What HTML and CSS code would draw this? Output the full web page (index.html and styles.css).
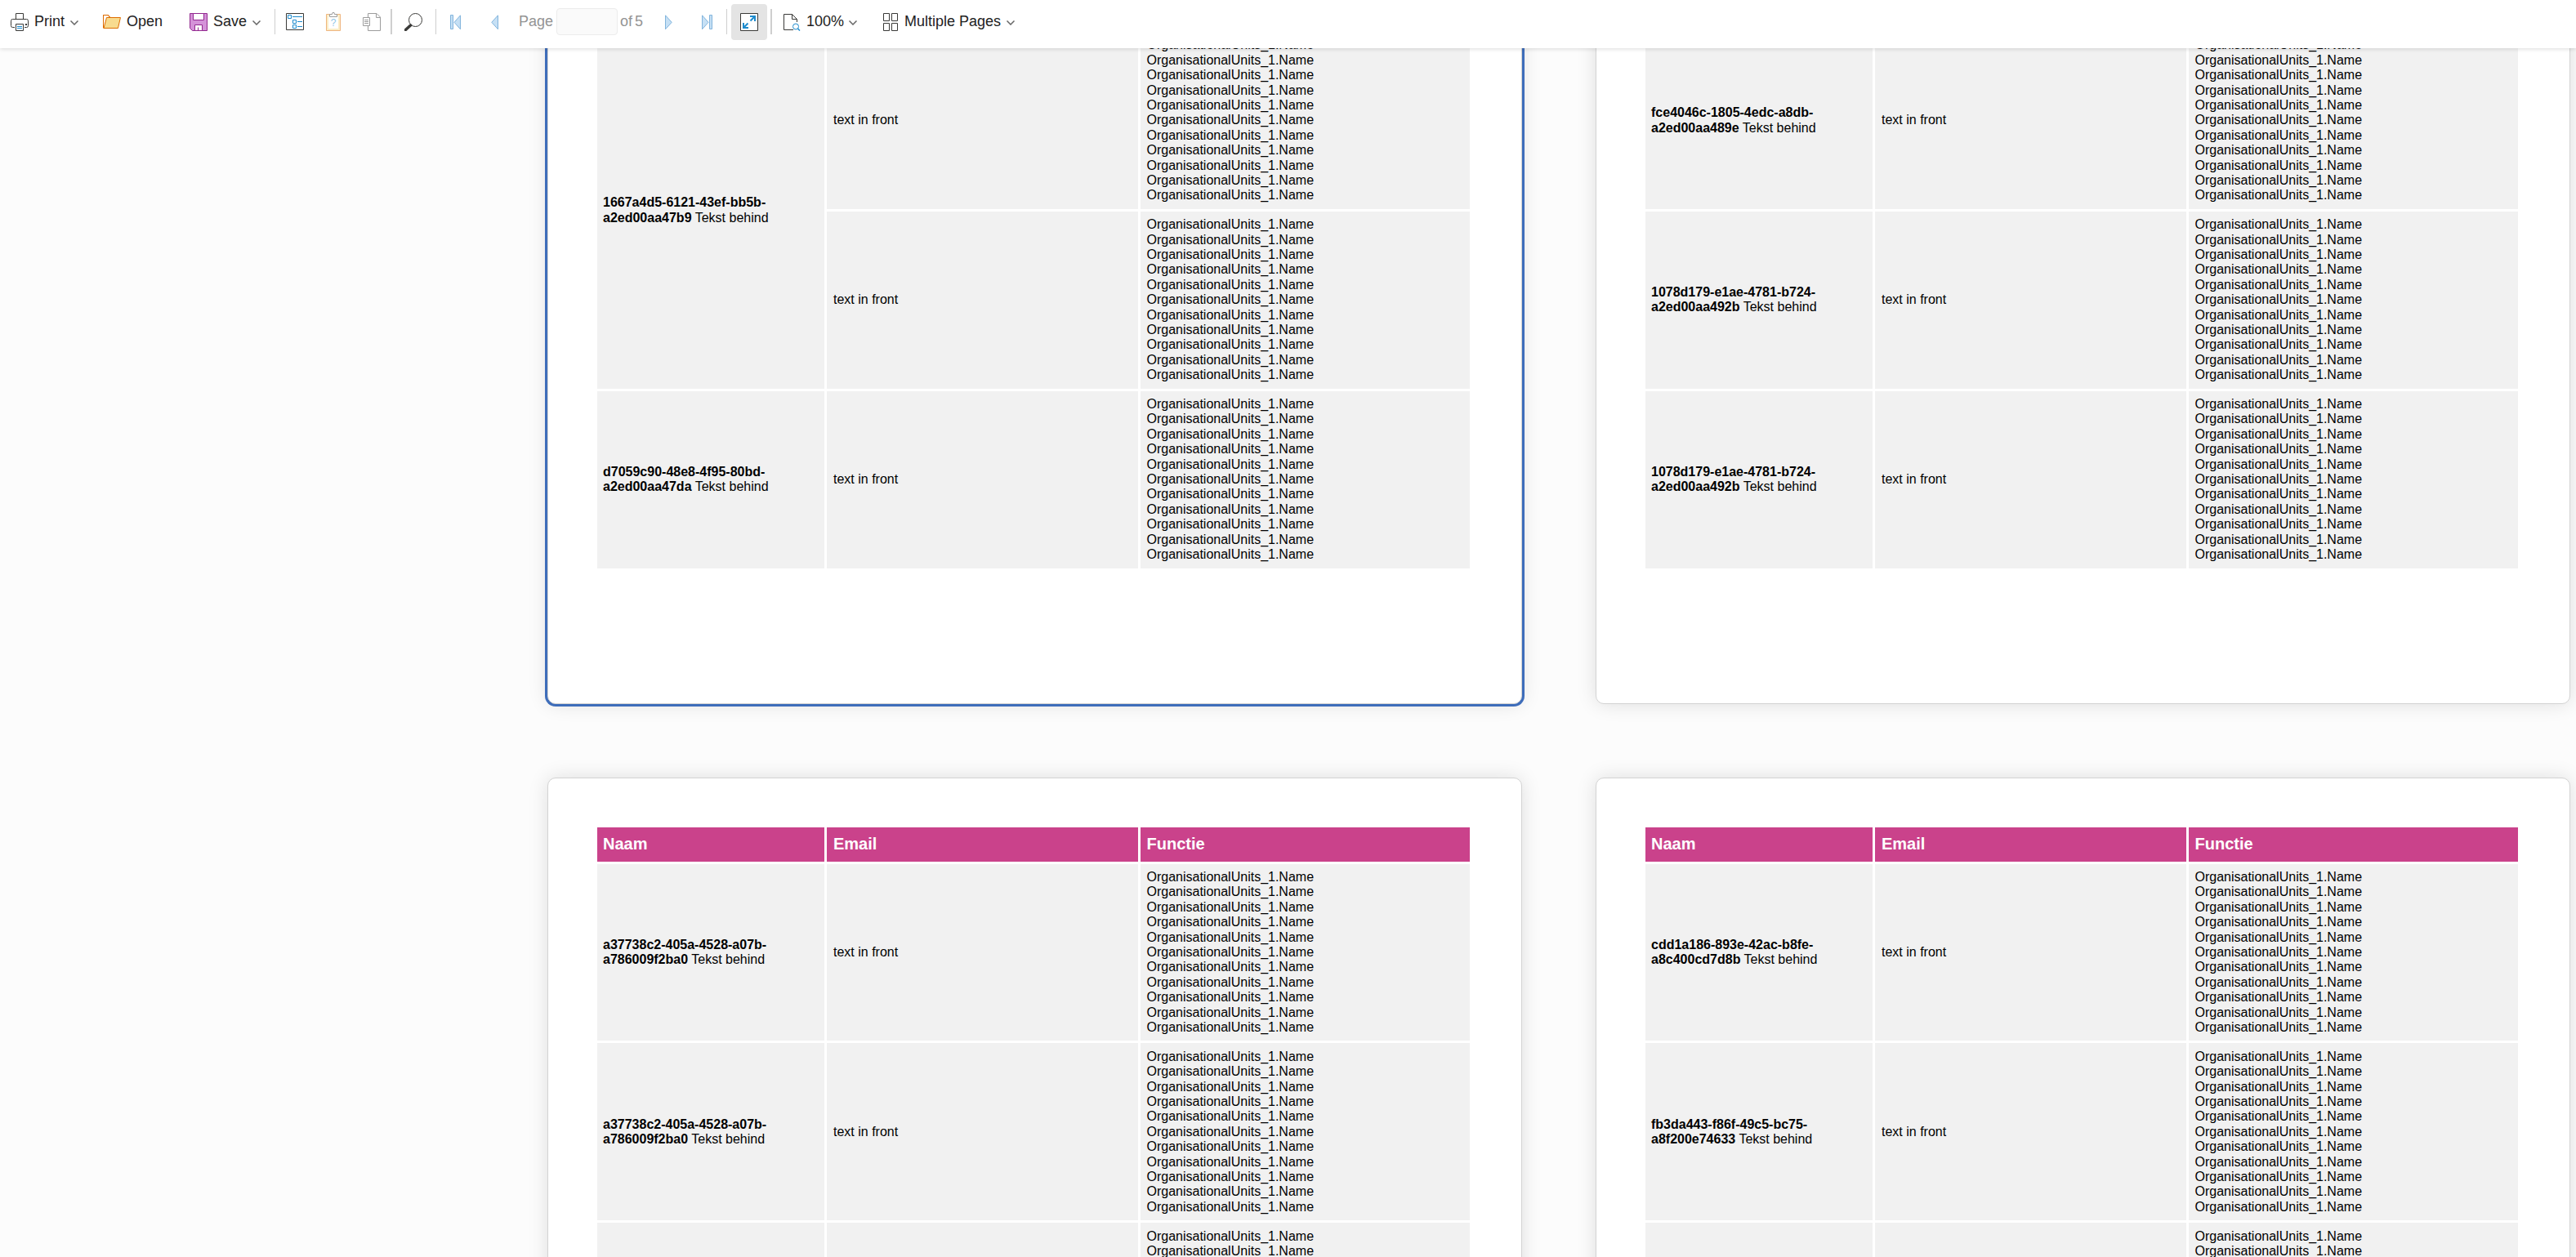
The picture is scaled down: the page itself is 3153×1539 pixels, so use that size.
FILE: index.html
```html
<!DOCTYPE html>
<html lang="en">
<head>
<meta charset="utf-8">
<title>Report viewer</title>
<link rel="stylesheet" href="styles.css">
</head>
<body>
<div class="viewer">
  <header class="toolbar">
    <div class="tool tool-print">
      <svg class="icon" width="22" height="22" viewBox="0 0 22 22" fill="none" stroke="#3a3a38">
        <path d="M6.5 7.500V.5h9v7M5 17.500H2.500a2 2 0 0 1-2-2v-6a2 2 0 0 1 2-2h17a2 2 0 0 1 2 2v6a2 2 0 0 1-2 2H17M6.500 13.500h9v8h-9z"/>
        <path d="M8 16.500h6M8 18.500h6" stroke="#1e8bcd"/><path d="M18 14h2" stroke-width="2"/>
      </svg>
      <span class="label label-print">Print</span>
      <svg class="chevron" width="10" height="6" viewBox="0 0 10 6"><path d="M.5.500 5 5 9.500.500"/></svg>
    </div>
    <div class="tool tool-open">
      <svg class="icon" width="22" height="17" viewBox="0 0 22 17" stroke="#de6c00">
        <path d="M.5 16V.500h6l2 3h9v3" fill="#fff"/><path d="M1 16.500 4.500 3.500h17l-3 13z" fill="#f8db8f"/><path d="M.5 16.500V.500h6l2.500 3" fill="none"/>
      </svg>
      <span class="label">Open</span>
    </div>
    <div class="tool tool-save">
      <svg class="icon" width="22" height="22" viewBox="0 0 22 22" stroke="#92278f">
        <path d="M.5.500h21v21H3.500l-3-3z" fill="#d492d8"/><path d="M4.500.500h13v8h-13zM6.500 21.500v-7h9v7z" fill="#fff"/><path d="M10.500 17.500v4" />
      </svg>
      <span class="label label-save">Save</span>
      <svg class="chevron" width="10" height="6" viewBox="0 0 10 6"><path d="M.5.500 5 5 9.500.500"/></svg>
    </div>
    <i class="sep sep-file"></i>
    <svg class="icon icon-params" width="22" height="21" viewBox="0 0 22 21" fill="none" stroke="#1e8bcd">
      <path d="M.5.500h21v20H.500z" stroke="#3a3a38"/><path d="M2.500 2.500h4v4h-4zM8.500 8.500h4v4h-4zM8.500 14.500h4v4h-4zM8 4.500h12M14 10.500h6M14 16.500h6"/>
    </svg>
    <svg class="icon icon-clipboard" width="18" height="23" viewBox="0 0 18 23" fill="none">
      <path d="M.5 2.500h17v20H.500z" fill="#fbedc7" stroke="#eeb57f"/><path d="M3 5h12v15H3z" fill="#fff"/>
      <path d="M4.500 5.500v-3h3l.5-2h2l.5 2h3v3z" fill="#fff" stroke="#9c9c9c"/>
      <text class="question" x="9" y="16.500">?</text>
    </svg>
    <svg class="icon icon-copy" width="22" height="22" viewBox="0 0 22 22" fill="none" stroke="#9c9c9c">
      <path d="M6.500 5V.500H17l4.500 4.500v16.500h-15V16M16.500.500v5h5M.5 5.500h8v10h-8zM2 8.500h5M2 10.500h5M2 12.500h5"/>
    </svg>
    <i class="sep sep-wide sep-edit"></i>
    <svg class="icon icon-find" width="22" height="22" viewBox="0 0 22 22" fill="none" stroke="#3a3a38">
      <circle cx="13.500" cy="8.500" r="8"/><path d="m1.500 20.500 6-5.500" stroke-width="3.500" stroke-linecap="round"/>
    </svg>
    <i class="sep sep-find"></i>
    <svg class="nav nav-first" width="13" height="19" viewBox="0 0 13 19"><path d="M.5.500h3v17h-3zM12.500.800v17L5 9.300z"/></svg>
    <svg class="nav nav-prev" width="9" height="19" viewBox="0 0 9 19"><path d="M8.500.800v17L.800 9.300z"/></svg>
    <span class="label label-off label-page">Page</span>
    <input class="page-input" type="text" aria-label="Page" disabled>
    <span class="label label-off label-of">of</span>
    <span class="label label-off label-total">5</span>
    <svg class="nav nav-next" width="9" height="19" viewBox="0 0 9 19"><path d="M.5.800v17l7.700-8.500z"/></svg>
    <svg class="nav nav-last" width="13" height="19" viewBox="0 0 13 19"><path d="M9.500.500h3v17h-3zM.5.800v17L8 9.300z"/></svg>
    <i class="sep sep-nav"></i>
    <div class="toggle-full">
      <svg width="22" height="22" viewBox="0 0 22 22" fill="none">
        <path d="M.5.500h21v21H.500z" fill="#fff" stroke="#3a3a38"/>
        <path d="m12.500 9.500 5-5M9.500 12.500l-5 5" stroke="#1e8bcd" stroke-width="2"/><path d="M12 3h7v7h-2V5h-5zM3 12h2v5h5v2H3z" fill="#1e8bcd"/>
      </svg>
    </div>
    <i class="sep sep-wide sep-full"></i>
    <div class="tool tool-zoom">
      <svg class="icon" width="21" height="22" viewBox="0 0 21 22" fill="none" stroke="#3a3a38">
        <path d="M12 20.500H.500V1.500h10l6 6V11M10.500 1.500v6h6"/><g stroke="#1e8bcd"><circle cx="15" cy="16.500" r="3.500"/><path d="m17.500 19 2.500 2.500" stroke-width="1.500"/></g>
      </svg>
      <span class="label label-zoom">100%</span>
      <svg class="chevron" width="10" height="6" viewBox="0 0 10 6"><path d="M.5.500 5 5 9.500.500"/></svg>
    </div>
    <div class="tool tool-pages">
      <svg class="icon" width="18" height="22" viewBox="0 0 18 22" fill="none" stroke="#3a3a38">
        <path d="M.5.500h7v9h-7zM10.500.500h7v9h-7zM.5 12.500h7v9h-7zM10.500 12.500h7v9h-7z"/>
      </svg>
      <span class="label label-pages">Multiple Pages</span>
      <svg class="chevron" width="10" height="6" viewBox="0 0 10 6"><path d="M.5.500 5 5 9.500.500"/></svg>
    </div>
  </header>
  <main class="workspace">
    <div class="pages" id="pages"></div>
  </main>
</div>
<script src="report.js"></script>
</body>
</html>
```
FILE: styles.css
```css
* { box-sizing: border-box; }

body {
  margin: 0;
  background: #fcfcfc;
  color: #000;
  font-family: "Liberation Sans", Arial, sans-serif;
}

.viewer {
  display: flex;
  flex-direction: column;
  height: 100vh;
  overflow: hidden;
}

/* Toolbar */
.toolbar {
  display: flex;
  flex: none;
  align-items: center;
  height: 59px;
  padding: 0 0 5px 13px;
  background: #fff;
  box-shadow: 0 1px 5px rgba(0, 0, 0, .14);
  position: relative;
  z-index: 1;
}

.toolbar > * { flex: none; }

.tool {
  display: flex;
  align-items: center;
}

.tool .icon { margin-right: 7px; }

.label {
  color: #222;
  font-size: 18px;
  line-height: 20px;
  white-space: nowrap;
  margin-top: -2px;
}

.label-off { color: #949494; }

.label-print { width: 44px; }
.label-save { width: 48px; }
.label-zoom { width: 52px; }
.label-pages { width: 125px; }

.chevron {
  fill: none;
  stroke: #666;
  stroke-width: 1.5;
  margin-top: 2px;
}

.tool-open { width: 73px; margin-left: 30px; }
.tool-open .icon { margin-top: -1px; }
.tool-save { margin-left: 33px; }

.sep {
  width: 1px;
  height: 31px;
  background: #cfcfcf;
  margin-top: -1px;
}

.sep-wide { width: 2px; }

.sep-file { margin-left: 17px; }
.icon-params { margin-left: 13px; margin-top: -1px; }
.icon-clipboard { margin-left: 27px; margin-top: -1px; }
.icon-copy { margin-left: 27px; }
.sep-edit { margin-left: 12px; }
.icon-find { margin-left: 15px; }
.sep-find { margin-left: 16px; }

.question {
  fill: #8fc6e8;
  font-size: 12px;
  text-anchor: middle;
}

.nav {
  fill: #c6e0f5;
  stroke: #82b4dc;
  margin-top: 1px;
}

.nav-first { margin-left: 17px; }
.nav-prev { margin-left: 37px; }
.label-page { width: 46px; margin-left: 25px; }

.page-input {
  width: 75px;
  height: 33px;
  margin: -1px 0 0;
  border: 1px solid #ececec;
  border-radius: 4px;
  background: #fafafa;
}

.label-of { width: 18px; margin-left: 3px; }
.label-total { width: 10px; }
.nav-next { margin-left: 27px; }
.nav-last { margin-left: 36px; }
.sep-nav { margin-left: 17px; }

.toggle-full {
  display: flex;
  align-items: center;
  justify-content: center;
  width: 44px;
  height: 44px;
  margin-left: 5px;
  border-radius: 4px;
  background: #e4e4e4;
}

.sep-full { margin-left: 4px; }
.tool-zoom { margin-left: 14px; }
.tool-pages { margin-left: 32px; }
.tool-pages .icon { margin-right: 8px; }

/* Report pages */
.workspace {
  flex: 1;
  min-height: 0;
  overflow: hidden;
}

.pages {
  display: grid;
  grid-template-columns: 1193px 1193px;
  grid-auto-rows: 883.4px;
  gap: 90px;
  margin: -80.4px 0 0 670px;
}

.page {
  padding: 60px;
  border: 1px solid #d3d3d3;
  border-radius: 10px;
  background: #fff;
  box-shadow: 0 0 24px rgba(0, 0, 0, .12);
}

.page-current {
  box-shadow: 0 0 0 3px #3e6dba, 0 0 24px rgba(0, 0, 0, .12);
}

.report {
  display: grid;
  grid-template-columns: 278px 381px 403px;
  grid-auto-rows: 216.8px;
  gap: 3px;
}

.with-head { grid-template-rows: 41.6px; }

.head,
.cell {
  display: flex;
  flex-direction: column;
  justify-content: center;
  padding: 0 7px;
}

.head {
  padding-bottom: 1px;
  background: #ca428b;
  color: #fff;
  font-size: 20px;
  font-weight: bold;
}

.cell {
  padding-bottom: .8px;
  background: #f1f1f1;
  font-size: 16px;
  line-height: 18.4px;
}

.with-head .cell {
  padding-top: .3px;
  padding-bottom: 0;
}

.report .email { padding-left: 8px; }
.report .units { padding-left: 7.5px; }

.with-head .units-cut {
  justify-content: flex-start;
  padding-top: 7.5px;
}

.span-2 { grid-row: span 2; }
```
FILE: report.js
```js
const LINES_PER_ROW = 11;

// One entry per page; span is the number of rows the name cell covers.
const pages = [
  { current: true, names: [
    { id: ['1667a4d5-6121-43ef-bb5b-', 'a2ed00aa47b9'], span: 2 },
    { id: ['d7059c90-48e8-4f95-80bd-', 'a2ed00aa47da'], span: 1 } ] },
  { names: [
    { id: ['fce4046c-1805-4edc-a8db-', 'a2ed00aa489e'], span: 1 },
    { id: ['1078d179-e1ae-4781-b724-', 'a2ed00aa492b'], span: 1 },
    { id: ['1078d179-e1ae-4781-b724-', 'a2ed00aa492b'], span: 1 } ] },
  { head: true, names: [
    { id: ['a37738c2-405a-4528-a07b-', 'a786009f2ba0'], span: 1 },
    { id: ['a37738c2-405a-4528-a07b-', 'a786009f2ba0'], span: 1 },
    { span: 1, lines: 2 } ] },
  { head: true, names: [
    { id: ['cdd1a186-893e-42ac-b8fe-', 'a8c400cd7d8b'], span: 1 },
    { id: ['fb3da443-f86f-49c5-bc75-', 'a8f200e74633'], span: 1 },
    { span: 1, lines: 2 } ] }
];

const head = '<div class="head">Naam</div><div class="head email">Email</div><div class="head units">Functie</div>';

function nameCell({ id, span }) {
  const text = id ? `<div><b>${id[0]}<br>${id[1]}</b> Tekst behind</div>` : '';
  return `<div class="cell${span > 1 ? ' span-2' : ''}">${text}</div>`;
}

function rows(name) {
  const units = '<div>OrganisationalUnits_1.Name</div>'.repeat(name.lines || LINES_PER_ROW);
  const detail = `<div class="cell email">${name.id ? 'text in front' : ''}</div>
    <div class="cell units${name.lines ? ' units-cut' : ''}">${units}</div>`;
  return nameCell(name) + detail.repeat(name.span);
}

document.getElementById('pages').innerHTML = pages.map(page => `
  <section class="page${page.current ? ' page-current' : ''}">
    <div class="report${page.head ? ' with-head' : ''}">
      ${page.head ? head : ''}
      ${page.names.map(rows).join('')}
    </div>
  </section>`).join('');
```
